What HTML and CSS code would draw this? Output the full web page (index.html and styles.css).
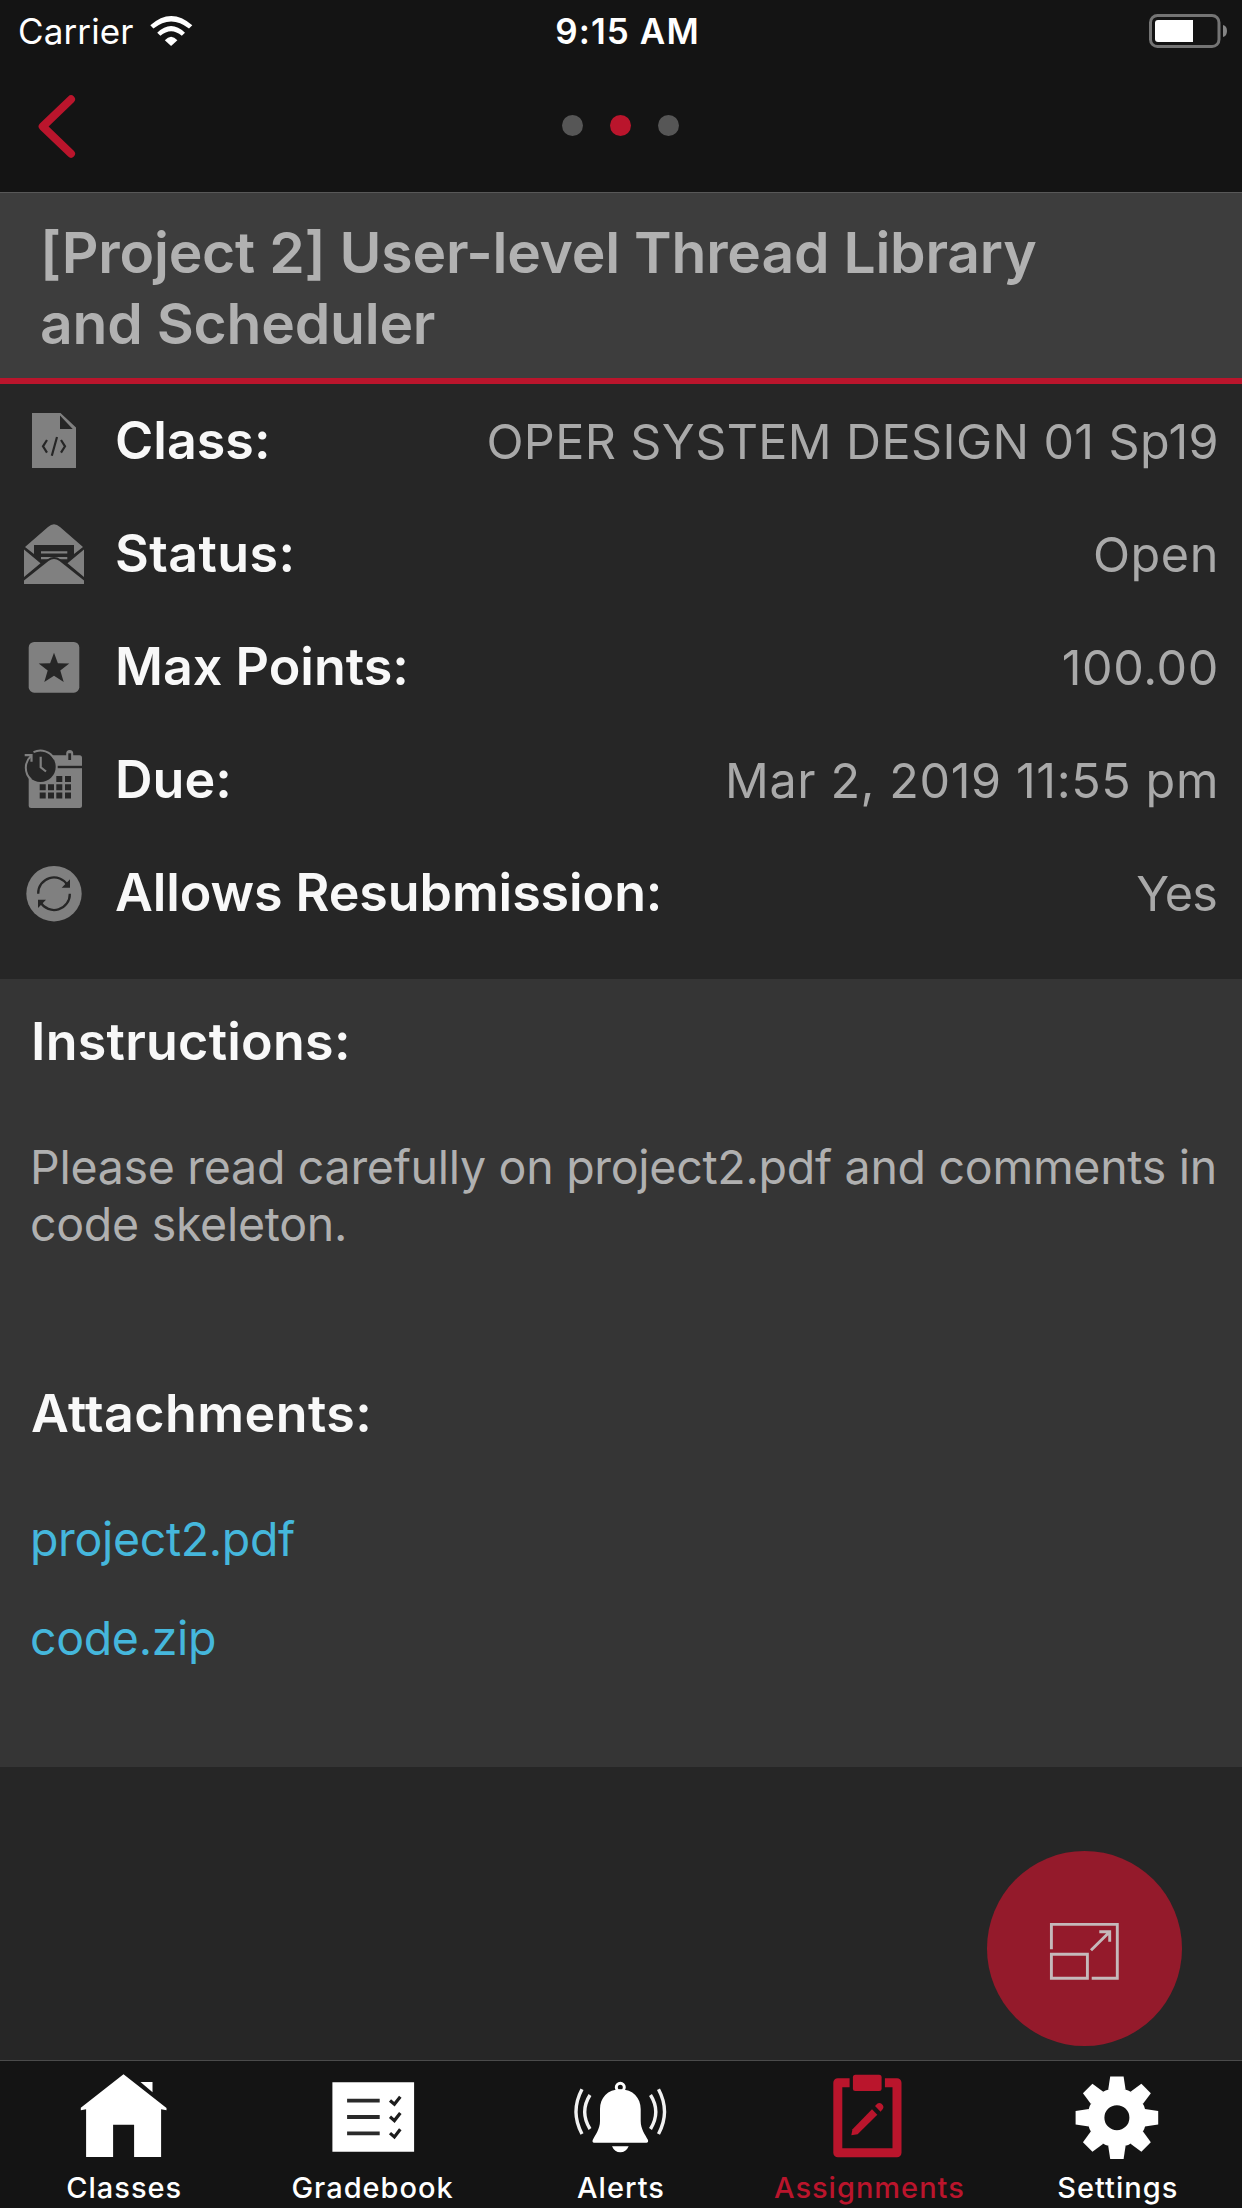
FILE: index.html
```html
<!DOCTYPE html>
<html lang="en">
<head>
<meta charset="utf-8">
<title>Assignment</title>
<link rel="stylesheet" href="styles.css">
</head>
<body>
<div class="screen">
  <header class="header">
    <div class="status">
      <div class="status-left">
        <span class="carrier">Carrier</span>
        <svg class="wifi" viewBox="0 0 43 31" fill="#fff"><path d="M.3 9.3Q21.2-9.3 42.3 9.3L39 12.5Q21.1-1.7 3.4 12.5Z"/><path d="M7.2 16.7Q21.1 3.3 35 16.7L31.8 19.8Q21.1 10.8 10.4 19.8Z"/><path d="M14.8 24.3Q21.1 17.1 27.4 24.3L21.1 30Z"/></svg>
      </div>
      <span class="time">9:15 AM</span>
      <svg class="battery" viewBox="0 0 79 35"><rect x="1.5" y="1.5" width="68.5" height="31" rx="7" fill="none" stroke="#747474" stroke-width="3"/><path d="M9 6H44V28H9Q6 28 6 25V9Q6 6 9 6Z" fill="#fff"/><path d="M74 11Q78 12 78 17T74 23Z" fill="#858585"/></svg>
    </div>
    <nav class="nav">
      <svg class="back" viewBox="0 0 44 69"><path d="M37 8.3L8.7 35.5L37 62.7" fill="none" stroke="#ba152c" stroke-width="8" stroke-linecap="round" stroke-linejoin="round"/></svg>
      <div class="dots"><i class="dot"></i><i class="dot dot-on"></i><i class="dot"></i></div>
    </nav>
  </header>

  <h1 class="title">[Project 2] User-level Thread Library<br>and Scheduler</h1>

  <dl class="details">
    <div class="row">
      <svg class="icon" viewBox="0 0 60 61"><path d="M8 3H36.5L52 17.5V58H8Z" fill="#808080"/><path d="M36 5.5V19H48.7Z" fill="#262626"/><path d="M23 30L19 36.3L23 42.7M33 27L27.8 45.7M37 30L41 36.3L37 42.7" fill="none" stroke="#262626" stroke-width="2.2"/></svg>
      <dt class="label">Class:</dt><dd class="value">OPER SYSTEM DESIGN 01 Sp19</dd>
    </div>
    <div class="row">
      <svg class="icon" viewBox="0 0 60 61"><g fill="#808080"><path d="M1 24L24 4Q30-1.400 36 4L59 24L50 31V22H10V31Z"/><path d="M17 28.200H43.300V30.500H17ZM17 34H43.300V36.300H17Z"/><path d="M0 26.500L16.500 40.300L0 54ZM60 26.500L43.500 40.300L60 54Z"/></g><path d="M0 57.500L24.500 38Q30 34 35.500 38L60 57.500" fill="none" stroke="#262626" stroke-width="4"/><path d="M0 57.500L24.500 38Q30 34 35.500 38L60 57.500V61H0Z" fill="#808080"/></svg>
      <dt class="label label-wide">Status:</dt><dd class="value value-wide">Open</dd>
    </div>
    <div class="row">
      <svg class="icon" viewBox="0 0 60 61"><rect x="4.700" y="6" width="50.600" height="50.700" rx="5.500" fill="#808080"/><path d="M30 16.700L33.900 27.300L45.300 27.500L36.300 34.500L39.700 46L30 39.800L20.300 46L23.700 34.500L14.700 27.500L26.100 27.300Z" fill="#262626"/></svg>
      <dt class="label">Max Points:</dt><dd class="value value-wide">100.00</dd>
    </div>
    <div class="row">
      <svg class="icon" viewBox="0 0 60 61">
        <path d="M7.200 6.300H55.500Q58 6.300 58 8.800V56.500Q58 59 55.500 59H7.200Q4.700 59 4.700 56.500V8.800Q4.700 6.300 7.200 6.300Z" fill="#808080"/>
        <rect x="3" y="4" width="13" height="20" fill="#262626"/>
        <circle cx="16.500" cy="17.700" r="15.200" fill="#262626"/>
        <path d="M9.500 3.100A16 16 0 0 1 30.500 10M7 30.600A16 16 0 0 1 7 7" fill="none" stroke="#808080" stroke-width="2"/>
        <path d="M.7 6.200H7.500V12.800" fill="none" stroke="#808080" stroke-width="2.200"/>
        <path d="M16.700 7.700V18.300L22 22.500" fill="none" stroke="#808080" stroke-width="2.200"/>
        <path d="M42.200 8V4.500A3.500 3.500 0 0 1 49.200 4.500V8Z" fill="#808080"/>
        <path d="M45.700 4.300V11" stroke="#262626" stroke-width="2.800"/>
        <path d="M33.700 18H58" stroke="#262626" stroke-width="2.400"/>
        <path d="M32.300 27h6v6h-6zM41 27h6v6h-6zM15.700 35.300h6v6h-6zM24 35.300h6v6h-6zM32.300 35.300h6v6h-6zM41 35.300h6v6h-6zM15.700 43.600h6v6h-6zM24 43.600h6v6h-6zM32.300 43.600h6v6h-6zM41 43.600h6v6h-6z" fill="#262626"/>
      </svg>
      <dt class="label">Due:</dt><dd class="value value-date">Mar 2, 2019 11:55 pm</dd>
    </div>
    <div class="row">
      <svg class="icon" viewBox="0 0 60 61"><circle cx="30" cy="31.700" r="27.700" fill="#808080"/><path d="M14.200 31.700A15.800 15.800 0 0 1 43.500 23M45.800 31.700A15.800 15.800 0 0 1 16.500 40.400" fill="none" stroke="#262626" stroke-width="2.300"/><path d="M37.700 25.700H46V17.300ZM22 37.700H14V46Z" fill="#262626"/></svg>
      <dt class="label label-tight">Allows Resubmission:</dt><dd class="value value-tight">Yes</dd>
    </div>
  </dl>

  <main class="panel">
    <h2 class="heading">Instructions:</h2>
    <p class="text">Please read carefully on project2.pdf and comments in<br>code skeleton.</p>
    <h2 class="heading heading-files">Attachments:</h2>
    <div class="files"><a class="file">project2.pdf</a><a class="file">code.zip</a></div>
  </main>

  <div class="fab">
    <svg viewBox="0 0 195 195" fill="none" stroke="#c5b9bb" stroke-width="2.900"><path d="M64.400 98.300V73.400H130.300V127.300H104.700"/><path d="M64.400 103.300H100.400V127.300H64.400Z"/><path d="M104 99.300L122.500 81M112.300 80.800H122.700V90.700"/></svg>
  </div>

  <footer class="tabs">
    <div class="tab">
      <svg class="tab-icon" viewBox="0 0 90 90" fill="#fff"><path d="M44.500 6.300L87.500 40V42.300L82.100 41.300V89H55.100V56.700H34.100V89H7.100V41.300L1.800 42.300V39.700Z"/><path d="M61.500 14H73.500V24.300Z"/></svg>
      <span>Classes</span>
    </div>
    <div class="tab">
      <svg class="tab-icon" viewBox="0 0 90 90"><path d="M4.400 14.300H86.100V83.700H4.400Z" fill="#fff"/><path d="M19.100 32.700H51.700M19.100 49H51.700M19.100 65.300H51.700" stroke="#2a2a2a" stroke-width="3.800"/><path d="M62 32.500L66.400 36.300L72.300 28.700M62 48.800L66.400 52.600L72.300 45M62 65.100L66.400 68.900L72.300 61.300" fill="none" stroke="#1c1c1c" stroke-width="3.200"/></svg>
      <span>Gradebook</span>
    </div>
    <div class="tab">
      <svg class="tab-icon" viewBox="0 0 90 90"><circle cx="44.300" cy="19.300" r="4" fill="none" stroke="#fff" stroke-width="3"/><path d="M44.300 21.300C57 21.300 64.700 30 64.700 41V53C64.700 61 69 66.500 72 72Q72.500 74.700 70.500 74.700H18Q16 74.700 16.700 72C19.500 66.500 24 61 24 53V41C24 30 31.500 21.300 44.300 21.300ZM36 78.300H52.700Q50 84.300 44.300 84.300T36 78.300Z" fill="#fff"/><path d="M6 21.300Q-6 43.700 6 66M14 27Q3.400 43.700 14 61M82.500 21.300Q94.500 43.700 82.500 66M74.500 27Q85.100 43.700 74.500 61" fill="none" stroke="#f2f2f2" stroke-width="3.400"/></svg>
      <span>Alerts</span>
    </div>
    <div class="tab tab-on">
      <svg class="tab-icon" viewBox="0 0 90 90"><path d="M25.600 14.800H13.800V84.700H73V14.800H60.900" fill="none" stroke="#ba152c" stroke-width="9" stroke-linejoin="round"/><g fill="#ba152c"><rect x="28.900" y="6.700" width="28.700" height="16.300" rx="2.500"/><path d="M27.300 67.300L28.500 61.300L48 41.300L53.300 46.700L33.600 66.300Z"/><path d="M51 38L53.500 35.600Q55.500 34 57.800 36Q60.500 38.500 58.800 41L56.500 43.700Z"/></g></svg>
      <span>Assignments</span>
    </div>
    <div class="tab">
      <svg class="tab-icon" viewBox="0 0 90 90"><defs><path id="tooth" d="M-6.700-41.300H6.700L8.700-28H-8.700Z"/></defs><g transform="translate(43.900 49.700)" fill="#fff"><use href="#tooth"/><use href="#tooth" transform="rotate(45)"/><use href="#tooth" transform="rotate(90)"/><use href="#tooth" transform="rotate(135)"/><use href="#tooth" transform="rotate(180)"/><use href="#tooth" transform="rotate(225)"/><use href="#tooth" transform="rotate(270)"/><use href="#tooth" transform="rotate(315)"/><circle r="21" fill="none" stroke="#fff" stroke-width="17"/></g></svg>
      <span>Settings</span>
    </div>
  </footer>
</div>
</body>
</html>
```
FILE: styles.css
```css
* { box-sizing: border-box; margin: 0; padding: 0; }
body { background: #262626; font-family: Inter, "Liberation Sans", sans-serif; }
svg { display: block; flex: none; overflow: visible; }

.screen { position: relative; width: 1242px; height: 2208px; display: flex; flex-direction: column; background: #262626; overflow: hidden; }

.header { background: #141414; border-bottom: 1px solid #585858; color: #fff; }
.status { height: 62px; display: grid; grid-template-columns: 1fr auto 1fr; align-items: center; padding: 0 14px 0 18px; font-size: 35px; line-height: 62px; }
.status-left { display: flex; align-items: center; gap: 16px; }
.carrier { letter-spacing: .13px; }
.wifi { width: 43px; height: 31px; }
.time { padding-left: 9px; font-weight: 600; letter-spacing: 1.1px; }
.battery { width: 79px; height: 35px; justify-self: end; }

.nav { height: 130px; display: grid; grid-template-columns: 1fr auto 1fr; align-items: center; padding: 0 35px 3px 34px; }
.back { width: 44px; height: 69px; }
.dots { display: flex; gap: 27px; }
.dot { width: 21px; height: 21px; border-radius: 50%; background: #565656; }
.dot-on { background: #ba152c; }

.title { height: 191px; padding: 24px 39px 0 40px; background: #3d3d3d; border-bottom: 6px solid #ba152c; color: #b1b1b1; font-size: 57px; font-weight: 600; line-height: 71px; letter-spacing: -.22px; }

.details { padding: 0 23px 30px 24px; }
.row { height: 113px; display: flex; align-items: center; }
.icon { width: 60px; height: 61px; margin-right: 31px; }
.label { flex: 1; color: #f8f8f8; font-size: 52px; font-weight: 600; line-height: 63px; white-space: nowrap; }
.label-wide { letter-spacing: .4px; }
.label-tight { letter-spacing: -.1px; }
.value { padding-top: 1px; color: #a9a9a9; font-size: 48.5px; line-height: 61px; letter-spacing: .38px; white-space: nowrap; }
.value-wide { letter-spacing: .6px; }
.value-date { letter-spacing: .6px; }
.value-tight { padding-right: 2px; letter-spacing: -.8px; }

.panel { height: 788px; padding: 31px 20px 0 31px; background: #353535; }
.heading { color: #f8f8f8; font-size: 52px; font-weight: 600; line-height: 64px; letter-spacing: .25px; }
.text { margin: 65px 0 129px -1px; color: #b0b0b0; font-size: 46.5px; line-height: 57px; letter-spacing: -.29px; white-space: nowrap; }
.heading-files { letter-spacing: .4px; }
.files { display: flex; flex-direction: column; margin: 44px 0 0 -1px; }
.file { color: #45b7dc; font-size: 46.5px; line-height: 99px; letter-spacing: -.35px; }

.fab { position: absolute; left: 987px; top: 1851px; width: 195px; height: 195px; border-radius: 50%; background: #941a2b; }

.tabs { height: 148px; margin-top: auto; display: grid; grid-template-columns: repeat(5, 1fr); background: #141414; border-top: 1px solid #4b4b4b; color: #fff; font-size: 29px; font-weight: 450; line-height: 40px; letter-spacing: 1px; }
.tab { display: flex; flex-direction: column; align-items: center; gap: 10px; padding-top: 7px; }
.tab-icon { width: 90px; height: 90px; }
.tab-on { color: #ba152c; }
```
